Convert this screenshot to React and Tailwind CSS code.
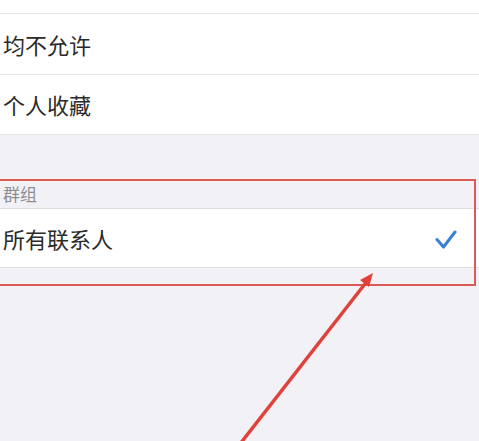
export default function App() {
  const font = { fontFamily: '"Noto Sans CJK SC", "Noto Sans", sans-serif' };
  return (
    <div className="relative w-[479px] h-[441px] overflow-hidden bg-[#f2f2f6]" style={font}>
      <div className="flex flex-col">
        <div className="h-[14px] bg-white border-b border-[#e6e6e8]" />
        <div className="h-[61px] bg-white border-b border-[#e6e6e8] flex items-center pl-[3px] text-[22px] text-[#2a2a2a]">
          均不允许
        </div>
        <div className="h-[60px] bg-white border-b border-[#e6e6e8] flex items-center pl-[3px] text-[22px] text-[#2a2a2a]">
          个人收藏
        </div>
        <div className="h-[44px]" />
        <div className="h-[30px] flex items-center pl-[3px] text-[17px] text-[#8e8e93] border-b border-[#dedee2]">
          群组
        </div>
        <div className="h-[59px] bg-white border-b border-[#e3e3e6] flex items-center justify-between pl-[3px] pr-[22px] text-[22px] text-[#2a2a2a]">
          <span>所有联系人</span>
          <svg className="mt-[4px]" width="22" height="20" viewBox="0 0 22 20" fill="none">
            <path d="M2 9.5 L8.5 17 L20 2" stroke="#3d7fd6" strokeWidth="3" strokeLinecap="round" strokeLinejoin="round" />
          </svg>
        </div>
      </div>
      <div className="absolute left-[-2px] top-[179px] w-[478px] h-[107px] border-2 border-[#dc5a55]" />
      <svg className="absolute left-0 top-0" width="479" height="441" viewBox="0 0 479 441">
        <line x1="240" y1="444" x2="368" y2="280" stroke="#e0413b" strokeWidth="3.5" />
        <path d="M373 273 L360 280 L369 287 Z" fill="#e0413b" />
      </svg>
    </div>
  );
}
